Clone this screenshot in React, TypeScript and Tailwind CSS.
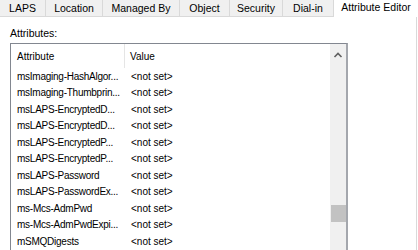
import React from 'react';

const tabs = [
  { name: 'LAPS', w: 'w-[46px]' },
  { name: 'Location', w: 'w-[57px]' },
  { name: 'Managed By', w: 'w-[77px]' },
  { name: 'Object', w: 'w-[50px]' },
  { name: 'Security', w: 'w-[53px]' },
  { name: 'Dial-in', w: 'w-[51px]' },
];

const rows = [
  'msImaging-HashAlgor...',
  'msImaging-Thumbprin...',
  'msLAPS-EncryptedD...',
  'msLAPS-EncryptedD...',
  'msLAPS-EncryptedP...',
  'msLAPS-EncryptedP...',
  'msLAPS-Password',
  'msLAPS-PasswordEx...',
  'ms-Mcs-AdmPwd',
  'ms-Mcs-AdmPwdExpi...',
  'mSMQDigests',
];

export default function App() {
  return (
    <div className="w-[418px] h-[250px] overflow-hidden bg-white text-[10.5px] text-black font-['Liberation_Sans',Arial,sans-serif] flex flex-col">
      {/* Tabs */}
      <div className="flex h-[17px] shrink-0">
        {tabs.map((t) => (
          <div
            key={t.name}
            className={`${t.w} h-full flex items-center justify-center pt-[2px] bg-[#f0f0f0] border-r border-b border-[#d9d9d9]`}
          >
            {t.name}
          </div>
        ))}
        <div className="flex-1 h-full flex items-center justify-center pb-[1px] bg-white">
          Attribute Editor
        </div>
      </div>

      {/* Page */}
      <div className="flex-1 mr-[1px] border-r border-[#d9d9d9] pl-[10px] pt-[9px]">
        <div className="h-[17px]">Attributes:</div>
        <div className="w-[338px] h-[220px] border-t border-l border-r-2 border-[#828790] border-r-[#a4a7ad] flex text-[10px]">
          <div className="flex-1">
            <div className="flex h-[24px] items-center">
              <div className="w-[114px] h-full flex items-center pl-[6px] border-r border-[#e5e5e5]">Attribute</div>
              <div className="pl-[5px]">Value</div>
            </div>
            {rows.map((r, i) => (
              <div key={i} className="flex h-[16.5px] items-center">
                <div className="w-[115px] pl-[6px] whitespace-nowrap tracking-[-0.25px]">{r}</div>
                <div className="pl-[5px] whitespace-nowrap">&lt;not set&gt;</div>
              </div>
            ))}
          </div>
          {/* Scrollbar */}
          <div className="w-[16px] bg-[#f0f0f0] flex flex-col items-center">
            <svg width="16" height="17" viewBox="0 0 16 17" className="mt-[2px]">
              <path d="M4.5 11 L8 7.5 L11.5 11" fill="none" stroke="#606060" strokeWidth="1.6" />
            </svg>
            <div className="mt-[142px] w-[15px] h-[17px] bg-[#c2c2c2]" />
          </div>
        </div>
      </div>
    </div>
  );
}
